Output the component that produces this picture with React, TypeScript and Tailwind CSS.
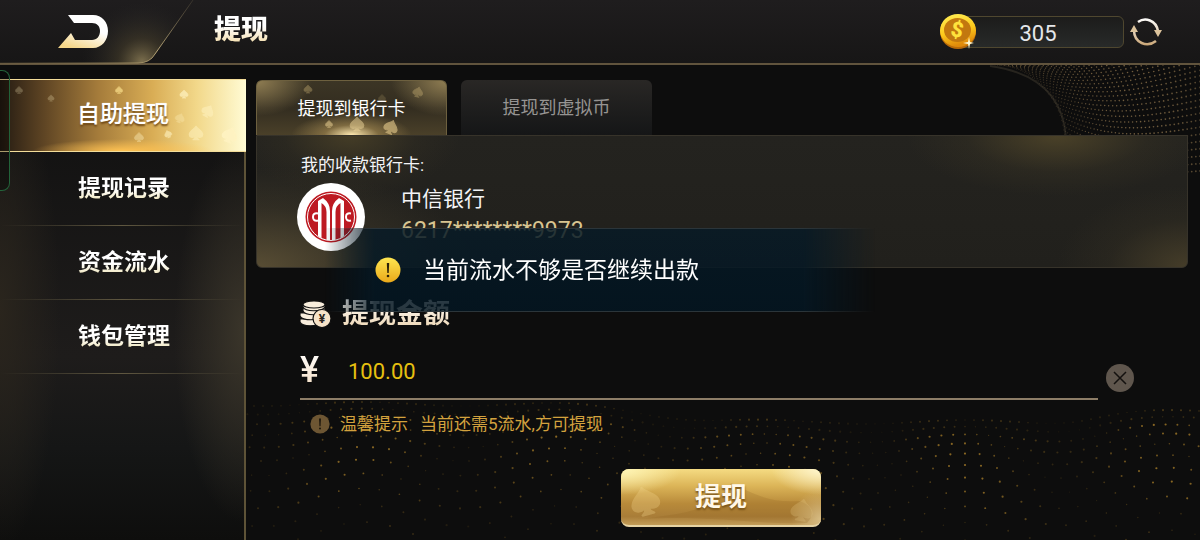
import React, { useState } from 'react';

const menuItems = ['自助提现', '提现记录', '资金流水', '钱包管理'];
const tabs = ['提现到银行卡', '提现到虚拟币'];

interface Dot {
  x: number;
  y: number;
  r: number;
  o: number;
}

// Rolling floor of golden dots behind the form
const makeFloorDots = (): Dot[] => {
  const dots: Dot[] = [];
  for (let row = 0; row < 13; row++) {
    const depth = row / 12;
    const spacing = 9 + row * 1.4;
    const half = Math.ceil(720 / spacing);
    for (let col = -half; col <= half; col++) {
      const x = 719 + col * spacing;
      const wave = Math.cos((x - 519) / 32);
      const sink = 18 / (1 + Math.exp((400 - x) / 30)) - 10 / (1 + Math.exp((850 - x) / 15));
      const y = 14 + row * 7 + row * row * 0.6 + sink - wave * (2 + depth * 12);
      const noise = Math.abs(Math.sin(row * 12.9 + col * 78.2));
      const fade = row < 2 ? 0.4 : row > 8 ? 0.45 : 0.9;
      dots.push({ x, y, r: 0.7 + noise * 0.4, o: fade * (0.35 + noise * 0.4) * (0.65 + wave * 0.35) });
    }
  }
  return dots;
};

// Fan of dots under the right end of the header
const makeCornerDots = (): Dot[] => {
  const dots: Dot[] = [];
  for (let row = 0; row < 26; row++) {
    const t = row / 25;
    const startX = 55 + 70 * Math.sin(t * 1.57);
    const startY = 80 - 80 * Math.cos(t * 1.57);
    for (let col = 0; col < 40; col++) {
      const u = col / 39;
      const x = startX + Math.pow(u, 1.2) * (260 - startX);
      const y = startY + 12 * Math.sin(u * 3.14) - u * (34 - t * 60);
      dots.push({ x, y, r: 0.6 + u * 0.3, o: 0.2 + 0.45 * Math.sin(u * 2.6) });
    }
  }
  return dots;
};

const floorDots = makeFloorDots();
const cornerDots = makeCornerDots();

const Dots: React.FC<{ dots: Dot[]; color: string }> = ({ dots, color }) => (
  <g fill={color}>
    {dots.map((d, i) => (
      <circle key={i} cx={d.x} cy={d.y} r={d.r} opacity={d.o} />
    ))}
  </g>
);

const SPADE = 'M10 1C8 5 1 7 1 12c0 4 5 5 8 2 0 2-1 4-3 5h8c-2-1-3-3-3-5 3 3 8 2 8-2 0-5-7-7-9-11z';

const Spade: React.FC<{ x: number; y: number; size: number; rotate?: number; fill?: string; opacity?: number }> = ({
  x,
  y,
  size,
  rotate = 0,
  fill = '#fff3c2',
  opacity = 0.5,
}) => (
  <path
    d={SPADE}
    fill={fill}
    stroke={fill}
    strokeWidth="1.500"
    strokeLinejoin="round"
    opacity={opacity}
    transform={`translate(${x} ${y}) rotate(${rotate}) scale(${size / 20}) translate(-10 -10)`}
  />
);

const BackIcon = () => (
  <svg width="50" height="35" viewBox="0 0 50 35" aria-hidden="true">
    <defs>
      <linearGradient id="back" x1="0.8" y1="0" x2="0.3" y2="1">
        <stop offset="0.4" stopColor="#ffffff" />
        <stop offset="1" stopColor="#f5d689" />
      </linearGradient>
    </defs>
    <path
      fill="url(#back)"
      d="M10 1h25c9 0 15 7 15 16s-6 17-15 17H0l13-15 4 7h17c5 0 8-4 8-9s-3-8-8-8H16z"
    />
  </svg>
);

const CoinIcon = () => (
  <svg className="relative z-10 -mr-4" width="36" height="36" viewBox="0 0 36 36" aria-hidden="true">
    <defs>
      <linearGradient id="coin" x1="0" y1="0" x2="0.3" y2="1">
        <stop offset="0" stopColor="#fff15a" />
        <stop offset="0.6" stopColor="#fdc91b" />
        <stop offset="1" stopColor="#e08a0a" />
      </linearGradient>
    </defs>
    <ellipse cx="18" cy="18" rx="18" ry="17" fill="#b96a08" />
    <ellipse cx="18" cy="16.500" rx="18" ry="16.500" fill="url(#coin)" />
    <ellipse cx="17.500" cy="16" rx="13.500" ry="12" fill="#c2780f" />
    <text
      x="17"
      y="23"
      textAnchor="middle"
      fontFamily="Roboto, sans-serif"
      fontSize="21"
      fontWeight="900"
      fill="#ffe23c"
      transform="rotate(12 17 17)"
    >
      $
    </text>
    <path d="M29 23l1 5 4 1-4 1-1 5-1-5-5-1 5-1z" fill="#fff8d0" />
  </svg>
);

const RefreshIcon = () => (
  <svg width="32" height="28" viewBox="0 0 32 28" aria-hidden="true">
    <defs>
      <linearGradient id="refresh" gradientUnits="userSpaceOnUse" x1="0" y1="0" x2="0" y2="28">
        <stop offset="0" stopColor="#ffffff" />
        <stop offset="1" stopColor="#c9a473" />
      </linearGradient>
    </defs>
    <g fill="none" stroke="url(#refresh)" strokeWidth="2.500">
      <path d="M8 4C15-1 26 2 28 13" />
      <path d="M4 12c0 13 13 18 22 11" />
    </g>
    <path d="M24 12h8l-4 7zM0 14l4-7 4 7z" fill="#dcc39c" />
  </svg>
);

const BankLogo = () => (
  <svg width="68" height="68" viewBox="6 6 68 68" role="img" aria-label="中信银行">
    <circle cx="40" cy="40" r="34" fill="#fff" />
    <circle cx="40" cy="40" r="25.500" fill="#bd1a22" />
    <circle cx="40" cy="40" r="23.500" fill="none" stroke="#fff" strokeWidth="1" />
    <g fill="#fff">
      <path d="M27 59V24l5-3q7 5 7 13v29h-3.500V35q0-6-5-9v35.500z" />
      <path d="M53 59V24l-5-3q-7 5-7 13v29h3.500V35q0-6 5-9v35.500z" />
    </g>
    <g fill="none" stroke="#fff" strokeWidth="2">
      <path d="M27 36.500q-5-1-5 3.500t5 3.500M60 36.500q-5-1-5 3.500t5 3.500" />
    </g>
  </svg>
);

const CoinsIcon = () => (
  <svg width="32" height="28" viewBox="0 0 32 28" aria-hidden="true">
    <g fill="#f8eddc" stroke="#111" strokeWidth="1.200">
      <path d="M0 19v3c2 5 18 5 21 0v-3z" />
      <path d="M0 13v3c2 5 20 5 22 0v-3z" />
      <path d="M3 8v3c2 5 19 5 22 0V8z" />
      <path d="M3 4v3c2 5 19 5 22 0V4z" />
      <ellipse cx="14" cy="4.500" rx="11" ry="3.500" />
      <circle cx="22" cy="18.500" r="9" fill="#f6e3c8" />
    </g>
    <text x="22" y="23" textAnchor="middle" fontFamily="Roboto, sans-serif" fontSize="12" fontWeight="700" fill="#2a241c">
      ¥
    </text>
  </svg>
);

const AlertIcon: React.FC<{ size: number; fill: string; mark: string }> = ({ size, fill, mark }) => (
  <svg className="shrink-0" width={size} height={size} viewBox="0 0 26 26" aria-hidden="true">
    <defs>
      <linearGradient id="alert" x1="0" y1="0" x2="0" y2="1">
        <stop offset="0" stopColor="#ffe650" />
        <stop offset="1" stopColor="#eaa91a" />
      </linearGradient>
    </defs>
    <circle cx="13" cy="13" r="12.500" fill={fill} />
    <path d="M11.800 6h2.400l-.5 10h-1.400z" fill={mark} />
    <circle cx="13" cy="19" r="1.300" fill={mark} />
  </svg>
);

const Header: React.FC = () => (
  <header className="relative flex h-[65px] shrink-0 items-center justify-between border-b-2 border-[#61543d] bg-linear-to-b from-[#1f1d1e] to-[#171616] pr-[38px]">
    <svg className="absolute left-0 top-0" width="200" height="64" viewBox="0 0 200 64" aria-hidden="true">
      <defs>
        <radialGradient id="corner" gradientUnits="userSpaceOnUse" cx="142" cy="62" r="60">
          <stop offset="0" stopColor="#a99767" stopOpacity="0.7" />
          <stop offset="0.4" stopColor="#71633f" stopOpacity="0.3" />
          <stop offset="1" stopColor="#333" stopOpacity="0" />
        </radialGradient>
        <linearGradient id="edge" x1="0" y1="1" x2="1" y2="0">
          <stop offset="0" stopColor="#a8905a" stopOpacity="0.2" />
          <stop offset="0.5" stopColor="#b8a678" />
          <stop offset="1" stopColor="#6b6048" stopOpacity="0.3" />
        </linearGradient>
      </defs>
      <path d="M0 0h193l-38 54q-5 9-17 9H0z" fill="url(#corner)" />
      <path d="M193 0l-38 54q-5 9-17 9H0" fill="none" stroke="url(#edge)" />
    </svg>
    <div className="relative flex items-center">
      <button type="button" aria-label="返回" className="w-[214px] pl-[58px]">
        <BackIcon />
      </button>
      <h1 className="-mt-1 bg-linear-to-b from-white from-40% to-[#f1d28c] bg-clip-text text-[27px] leading-10 font-black text-transparent">
        提现
      </h1>
    </div>
    <div className="flex items-center">
      <CoinIcon />
      <div className="mr-1.5 h-8 w-[164px] rounded-md border border-[#4f472f] bg-linear-to-b from-[#1c1c1b] to-[#282a29] pt-px pr-2 text-center text-[22px] leading-8 text-gray-200">
        305
      </div>
      <button type="button" aria-label="刷新">
        <RefreshIcon />
      </button>
    </div>
  </header>
);

const Sidebar: React.FC<{ active: number; onSelect: (index: number) => void }> = ({ active, onSelect }) => (
  <nav className="flex w-[246px] shrink-0 flex-col border-r-2 border-[#5e5337] bg-[radial-gradient(ellipse_70px_190px_at_100%_55%,#3a352a,transparent),radial-gradient(ellipse_60px_240px_at_0%_50%,#2a251d,transparent),linear-gradient(#101010,#1e1c1b_60%,#151616_80%,#0e0e0d)]">
    {menuItems.map((item, index) =>
      index === active ? (
        <button
          key={item}
          type="button"
          onClick={() => onSelect(index)}
          className="relative -mr-0.5 h-[73px] border-y border-[#f3dd9a] bg-[radial-gradient(ellipse_90px_12px_at_50%_100%,#ffc252,transparent),linear-gradient(90deg,#241b12,#5f4524_18%,#a57c3b_40%,#d9ad55_62%,#f2d88a_80%,#fffbd4)] text-[23px] font-medium text-white [text-shadow:0_2px_2px_#6b4310,0_0_1px_#fff]"
        >
          <svg className="absolute inset-0" width="246" height="71" viewBox="0 0 246 71" aria-hidden="true">
            <Spade x={19} y={10} size={8} opacity={0.25} />
            <Spade x={51} y={18} size={7} opacity={0.25} />
            <Spade x={119} y={10} size={8} fill="#fbe08c" opacity={0.7} />
            <Spade x={184} y={14} size={9} opacity={0.7} />
            <Spade x={208} y={31} size={13} rotate={30} opacity={0.5} />
            <Spade x={180} y={38} size={10} rotate={20} opacity={0.3} />
            <Spade x={139} y={57} size={10} opacity={0.4} />
            <Spade x={168} y={54} size={8} rotate={-20} opacity={0.6} />
            <Spade x={196} y={53} size={15} opacity={0.5} />
            <Spade x={230} y={55} size={16} rotate={20} opacity={0.9} />
          </svg>
          <span className="relative">{item}</span>
        </button>
      ) : (
        <button key={item} type="button" onClick={() => onSelect(index)} className="flex h-[74px] flex-col">
          <span className="flex w-full flex-1 items-center justify-center pt-0.5 pl-1">
            <span className="bg-linear-to-b from-white from-50% to-[#e8d793] bg-clip-text text-[23px] font-bold text-transparent">
              {item}
            </span>
          </span>
          <span className="h-px w-full bg-linear-to-r from-transparent via-[#5f5740] to-transparent" />
        </button>
      )
    )}
  </nav>
);

const BankTabs: React.FC<{ active: number; onSelect: (index: number) => void }> = ({ active, onSelect }) => (
  <div role="tablist" className="flex gap-3.5 pt-px">
    {tabs.map((tab, index) => (
      <button
        key={tab}
        type="button"
        role="tab"
        aria-selected={index === active}
        onClick={() => onSelect(index)}
        className={
          index === active
            ? 'relative h-[55px] w-[191px] rounded-t-md border border-b-0 border-[#6d603f] bg-[radial-gradient(ellipse_60px_22px_at_50%_100%,#ffe9b0,#a68b5299_45%,transparent),radial-gradient(ellipse_55px_35px_at_0%_0%,#8f7d52,transparent),radial-gradient(ellipse_55px_35px_at_100%_0%,#8f7d52,transparent),linear-gradient(#3c3525,#332d20_50%,#4a4029)] text-[18px] text-white'
            : 'h-[55px] w-[191px] rounded-t-md bg-linear-to-b from-[#292725] to-[#151617] text-[18px] text-[#969492]'
        }
      >
        {index === active && (
          <svg className="absolute inset-0" width="189" height="54" viewBox="0 0 189 54" aria-hidden="true">
            <Spade x={51} y={8} size={9} fill="#c9b074" opacity={0.4} />
            <Spade x={161} y={11} size={11} rotate={15} fill="#c9b074" opacity={0.4} />
            <Spade x={125} y={17} size={8} fill="#c9b074" opacity={0.2} />
            <Spade x={72} y={43} size={8} fill="#e0c78c" opacity={0.6} />
            <Spade x={100} y={43} size={15} fill="#f0d89c" opacity={0.5} />
            <Spade x={134} y={46} size={15} rotate={20} fill="#d5bb80" opacity={0.7} />
          </svg>
        )}
        <span className="relative">{tab}</span>
      </button>
    ))}
  </div>
);

const BankCard: React.FC = () => (
  <section className="rounded-md rounded-t-none border border-[#37332a] bg-[radial-gradient(ellipse_150px_60px_at_86%_0%,#4a4128,#4a412833_60%,transparent),radial-gradient(ellipse_130px_80px_at_100%_100%,#453d29,#453d2933_60%,transparent),radial-gradient(ellipse_110px_60px_at_10%_0%,#443c26,#443c2633_60%,transparent),radial-gradient(ellipse_220px_100px_at_0%_100%,#584d34,#584d3444_60%,transparent),linear-gradient(#24231f,#21201c)] px-10 pt-[17px] pb-4">
    <h2 className="pl-1 text-[17px] leading-6 text-gray-100">我的收款银行卡:</h2>
    <div className="mt-1.5 flex gap-9">
      <BankLogo />
      <div>
        <p className="text-[21px] leading-8 text-gray-100">中信银行</p>
        <p className="text-[23px] leading-8 text-[#d9c591]">6217********9973</p>
      </div>
    </div>
  </section>
);

const WithdrawForm: React.FC = () => {
  const [amount, setAmount] = useState('100.00');

  return (
    <form className="pt-[30px] pr-[54px] pb-3 pl-11" onSubmit={(e) => e.preventDefault()}>
      <div className="flex items-center gap-2.5">
        <CoinsIcon />
        <label
          htmlFor="amount"
          className="bg-linear-to-b from-white to-[#ecd4b0] bg-clip-text text-[27px] leading-8 font-bold text-transparent"
        >
          提现金额
        </label>
      </div>

      <div className="mt-3 flex items-end gap-2">
        <div className="flex h-[58px] min-w-0 flex-1 items-center border-b-2 border-[#8d7d67]">
          <span className="w-12 bg-linear-to-b from-white to-[#f3dcc0] bg-clip-text text-[36px] leading-10 font-medium text-transparent">
            ¥
          </span>
          <input
            id="amount"
            type="text"
            value={amount}
            onChange={(e) => setAmount(e.target.value)}
            className="h-10 min-w-0 flex-1 bg-transparent pt-0.5 text-[22px] text-[#e6c010] outline-none"
          />
        </div>
        <button
          type="button"
          aria-label="清除"
          onClick={() => setAmount('')}
          className="mb-2 flex size-7 items-center justify-center rounded-full bg-[#5f564d]"
        >
          <svg width="14" height="14" viewBox="0 0 14 14" stroke="#14110f" strokeWidth="1.500" aria-hidden="true">
            <path d="M1 1l12 12M13 1L1 13" />
          </svg>
        </button>
      </div>

      <div className="mt-3 flex items-center gap-2.5 pl-2.5 text-[17px] leading-6 text-[#d3a23e]">
        <AlertIcon size={20} fill="#6d5633" mark="#1b150c" />
        <p className="flex gap-3">
          <span>温馨提示</span>
          <span>当前还需5流水,方可提现</span>
        </p>
      </div>

      <button
        type="submit"
        className="relative mx-auto mt-[33px] block h-[58px] w-[200px] translate-x-1 overflow-hidden rounded-lg border-b-2 border-[#e6d3a4] bg-[radial-gradient(ellipse_50px_26px_at_100%_0%,#fff6cf,transparent),radial-gradient(ellipse_60px_26px_at_0%_0%,#fff6b8,transparent),radial-gradient(ellipse_30px_30px_at_100%_90%,#d8bd84,transparent),linear-gradient(#f5db82,#dcb558_30%,#b88a3a_62%,#a97d38_85%,#c39d58)] text-[26px] font-bold text-[#fff8e8] [text-shadow:0_2px_2px_#7a5418]"
      >
        <svg className="absolute inset-0" width="200" height="58" viewBox="0 0 200 58" aria-hidden="true">
          <path d="M110 14c25 12 40 20 68 18 14 4 16 14 8 22-50 2-90-8-170-4 40-4 80-8 94-36z" fill="#8a6020" opacity="0.2" />
          <Spade x={24} y={32} size={30} rotate={-15} fill="#f3d890" opacity={0.3} />
          <Spade x={181} y={41} size={23} rotate={10} fill="#e8cc88" opacity={0.25} />
        </svg>
        <span className="relative">提现</span>
      </button>
    </form>
  );
};

const Toast: React.FC<{ message: string }> = ({ message }) => (
  <div
    role="alert"
    className="absolute top-[228px] left-1/2 flex h-[84px] w-[550px] -translate-x-1/2 items-center gap-[22px] border-y border-[#2b353a] bg-linear-to-b from-[#071a26]/85 to-[#041723]/85 pl-[50px] text-[23px] text-white [mask-image:linear-gradient(90deg,transparent,#000_9%,#000_87%,transparent)]"
  >
    <AlertIcon size={26} fill="url(#alert)" mark="#2c2208" />
    <span className="pt-0.5">{message}</span>
  </div>
);

const App: React.FC = () => {
  const [activeMenu, setActiveMenu] = useState(0);
  const [activeTab, setActiveTab] = useState(0);

  return (
    <div className="relative flex min-h-screen flex-col overflow-hidden bg-[#0d0d0d] font-[Roboto,'Noto_Sans_CJK_SC',sans-serif]">
      <Header />

      <div className="relative flex flex-1 pt-3.5">
        {/* Background dots */}
        <svg className="absolute top-0 right-0" width="260" height="150" viewBox="0 0 260 150" aria-hidden="true">
          <Dots dots={cornerDots} color="#a8895a" />
          <path d="M50 1q72 10 76 72" fill="none" stroke="#5a5040" strokeWidth="2" opacity="0.35" />
        </svg>
        <svg className="absolute right-0 bottom-0" width="954" height="150" viewBox="0 0 954 150" aria-hidden="true">
          <Dots dots={floorDots} color="#c9962f" />
        </svg>

        <Sidebar active={activeMenu} onSelect={setActiveMenu} />
        <main className="relative min-w-0 flex-1 pr-3 pl-2.5">
          <BankTabs active={activeTab} onSelect={setActiveTab} />
          <BankCard />
          <WithdrawForm />
        </main>
      </div>

      <div className="absolute top-[70px] left-0 h-[121px] w-2.5 rounded-r-lg border border-l-0 border-[#23633a] bg-black/30" />
      <Toast message="当前流水不够是否继续出款" />
    </div>
  );
};

export default App;
